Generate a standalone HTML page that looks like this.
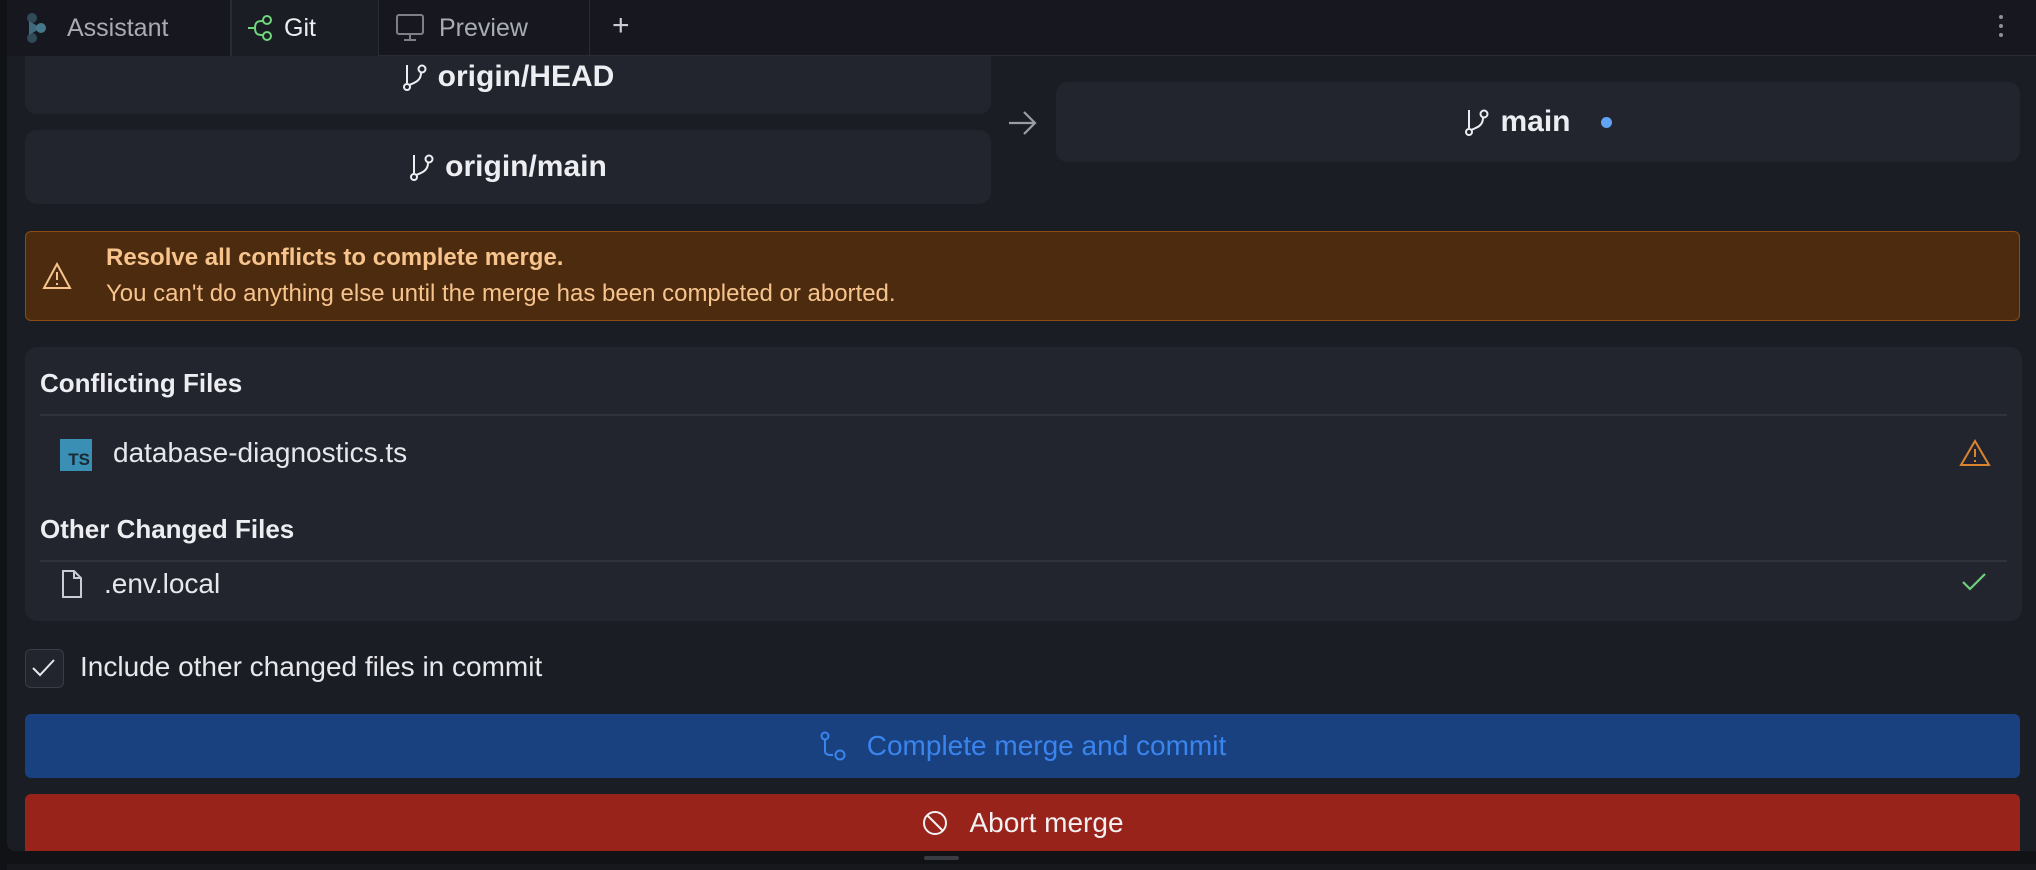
<!DOCTYPE html>
<html><head><meta charset="utf-8">
<style>
*{box-sizing:border-box;margin:0;padding:0}
body{width:2036px;height:870px;overflow:hidden;background:#111216;font-family:"Liberation Sans",sans-serif;position:relative}
.abs{position:absolute}
.tabbar{left:0;top:0;width:2036px;height:56px;background:#17181f;border-bottom:1px solid #2a2c33;z-index:5}
.tab{top:0;height:56px;display:flex;align-items:center;font-size:25px;color:#a9acb4;border-right:1px solid #2a2c33;z-index:6}
.main{left:7px;top:56px;width:2029px;height:795px;background:#1b1d24;border-bottom-left-radius:8px}
.card{background:#22252d;border-radius:12px;display:flex;align-items:center;justify-content:center;color:#eceef2;font-weight:bold;font-size:30px}
.card svg{margin-right:10px}
.warn{left:25px;top:231px;width:1995px;height:90px;background:#4d2b0e;border:1.5px solid #8c4c12;border-radius:6px;color:#f7c48d}
.panel{left:25px;top:347px;width:1997px;height:274px;background:#22252d;border-radius:12px}
.h{font-weight:bold;font-size:26px;color:#eceef2;position:absolute;left:15px}
.div{position:absolute;left:15px;right:15px;height:2px;background:#30333b}
.fname{position:absolute;font-size:28px;color:#e6e8ec}
.btn{left:25px;width:1995px;display:flex;align-items:center;justify-content:center;font-size:28px;border-radius:6px}
</style></head><body>
<div class="abs main"></div>

<div class="abs card" style="left:25px;top:40px;width:966px;height:74px">
 <svg width="26" height="28" viewBox="0 0 26 28" fill="none" stroke="#eceef2" stroke-width="2"><path d="M5 2 V20 M19 10 C19 18 12 20 7 22"/><circle cx="5" cy="24" r="3"/><circle cx="20" cy="6" r="3.5"/></svg>origin/HEAD</div>
<div class="abs card" style="left:25px;top:130px;width:966px;height:74px">
 <svg width="26" height="28" viewBox="0 0 26 28" fill="none" stroke="#eceef2" stroke-width="2"><path d="M5 2 V20 M19 10 C19 18 12 20 7 22"/><circle cx="5" cy="24" r="3"/><circle cx="20" cy="6" r="3.5"/></svg>origin/main</div>
<svg class="abs" style="left:1006px;top:107px" width="32" height="32" viewBox="0 0 32 32" fill="none" stroke="#9a9da5" stroke-width="2.2"><path d="M3 16 H29 M18 5 L29 16 L18 27"/></svg>
<div class="abs card" style="left:1056px;top:82px;width:964px;height:80px">
 <svg width="26" height="28" viewBox="0 0 26 28" fill="none" stroke="#eceef2" stroke-width="2"><path d="M5 2 V20 M19 10 C19 18 12 20 7 22"/><circle cx="5" cy="24" r="3"/><circle cx="20" cy="6" r="3.5"/></svg>main<span style="display:inline-block;width:11px;height:11px;border-radius:6px;background:#61a3f5;margin-left:30px"></span></div>

<div class="abs tabbar"></div>
<div class="abs" style="left:0;top:0;width:7px;height:870px;background:#111216;z-index:7"></div>
<div class="abs tab" style="left:7px;width:224px;background:#17181f">
 <svg width="26" height="34" viewBox="0 0 26 34" style="margin-left:18px;margin-right:16px"><circle cx="7" cy="7" r="5" fill="#2f4b58"/><circle cx="7" cy="27" r="5" fill="#2f4b58"/><path d="M4 10 L16 17 L4 24 Z" fill="#3f6a7c"/><circle cx="16" cy="17" r="5" fill="#46788b"/></svg>Assistant</div>
<div class="abs tab" style="left:231px;width:148px;background:#1b1d24;color:#eceef2;border-left:1px solid #2a2c33">
 <svg width="28" height="30" viewBox="0 0 28 30" style="margin-left:14px;margin-right:10px" fill="none" stroke="#6fd67c" stroke-width="2"><path d="M2 15 H9 M9 15 C9 8 13 8 17 8 M9 15 C9 22 13 22 17 22"/><circle cx="21" cy="7" r="4"/><circle cx="21" cy="23" r="4"/></svg>Git</div>
<div class="abs tab" style="left:379px;width:211px">
 <svg width="30" height="30" viewBox="0 0 30 30" style="margin-left:16px;margin-right:14px" fill="none" stroke="#7d8088" stroke-width="2"><rect x="2" y="2" width="26" height="19" rx="2"/><path d="M15 21 V27 M9 27 H21"/></svg>Preview</div>
<div class="abs" style="left:612px;top:9px;font-size:30px;color:#c9ccd2;z-index:6">+</div>
<div class="abs" style="left:1999px;top:15px;width:4px;z-index:6">
 <div style="width:4px;height:4px;border-radius:2px;background:#8d9098;margin-bottom:5px"></div><div style="width:4px;height:4px;border-radius:2px;background:#8d9098;margin-bottom:5px"></div><div style="width:4px;height:4px;border-radius:2px;background:#8d9098"></div></div>

<div class="abs warn">
 <svg class="abs" style="left:16px;top:30px" width="30" height="28" viewBox="0 0 30 28" fill="none" stroke="#f7c48d" stroke-width="2"><path d="M15 2 L28 26 H2 Z"/><path d="M15 10 V18 M15 21 V23"/></svg>
 <div class="abs" style="left:80px;top:12px;font-size:24px;font-weight:bold">Resolve all conflicts to complete merge.</div>
 <div class="abs" style="left:80px;top:48px;font-size:24px">You can't do anything else until the merge has been completed or aborted.</div>
</div>

<div class="abs panel">
 <div class="h" style="top:21px">Conflicting Files</div>
 <div class="div" style="top:67px"></div>
 <div class="abs" style="left:35px;top:92px;width:32px;height:32px;background:#3a8fb5;color:#1a2a35;font-weight:bold;font-size:17px;display:flex;align-items:flex-end;justify-content:flex-end;padding:0 2px 1px 0">TS</div>
 <div class="fname" style="left:88px;top:90px">database-diagnostics.ts</div>
 <svg class="abs" style="left:1934px;top:92px" width="32" height="28" viewBox="0 0 32 28" fill="none" stroke="#d98530" stroke-width="2"><path d="M16 2 L30 26 H2 Z"/><path d="M16 10 V18 M16 21 V23"/></svg>
 <div class="h" style="top:167px">Other Changed Files</div>
 <div class="div" style="top:213px"></div>
 <svg class="abs" style="left:36px;top:222px" width="22" height="30" viewBox="0 0 22 30" fill="none" stroke="#c9ccd2" stroke-width="2"><path d="M2 2 H13 L20 9 V28 H2 Z M13 2 V9 H20"/></svg>
 <div class="fname" style="left:79px;top:221px">.env.local</div>
 <svg class="abs" style="left:1936px;top:224px" width="26" height="22" viewBox="0 0 26 22" fill="none" stroke="#6fcf7c" stroke-width="2.2"><path d="M2 11 L9 18 L24 3"/></svg>
</div>

<div class="abs" style="left:25px;top:649px;width:39px;height:39px;border:1.5px solid #3a3d45;border-radius:6px;background:#22252d">
 <svg width="36" height="36" viewBox="0 0 36 36" fill="none" stroke="#e6e8ec" stroke-width="2"><path d="M7 18 L14 25 L28 10"/></svg></div>
<div class="abs" style="left:80px;top:651px;font-size:28px;color:#e6e8ec">Include other changed files in commit</div>

<div class="abs btn" style="top:714px;height:64px;background:#1a417f;color:#3a84ee">
 <svg width="28" height="30" viewBox="0 0 28 30" fill="none" stroke="#3a84ee" stroke-width="2" style="margin-right:20px"><circle cx="6" cy="5" r="3.5"/><path d="M6 9 V20 C6 24 10 24 14 24"/><circle cx="21" cy="24" r="4.5"/></svg>Complete merge and commit</div>
<div class="abs btn" style="top:794px;height:57px;background:#98231a;color:#f1f1f1;border-radius:6px 6px 0 0">
 <svg width="28" height="28" viewBox="0 0 28 28" fill="none" stroke="#f1f1f1" stroke-width="2" style="margin-right:20px"><circle cx="14" cy="14" r="11"/><path d="M6 6 L22 22"/></svg>Abort merge</div>
<div class="abs" style="left:924px;top:856px;width:35px;height:4px;border-radius:2px;background:#3a3c43"></div>
<div class="abs" style="left:0;top:864px;width:2036px;height:6px;background:#17181d"></div>
</body></html>
